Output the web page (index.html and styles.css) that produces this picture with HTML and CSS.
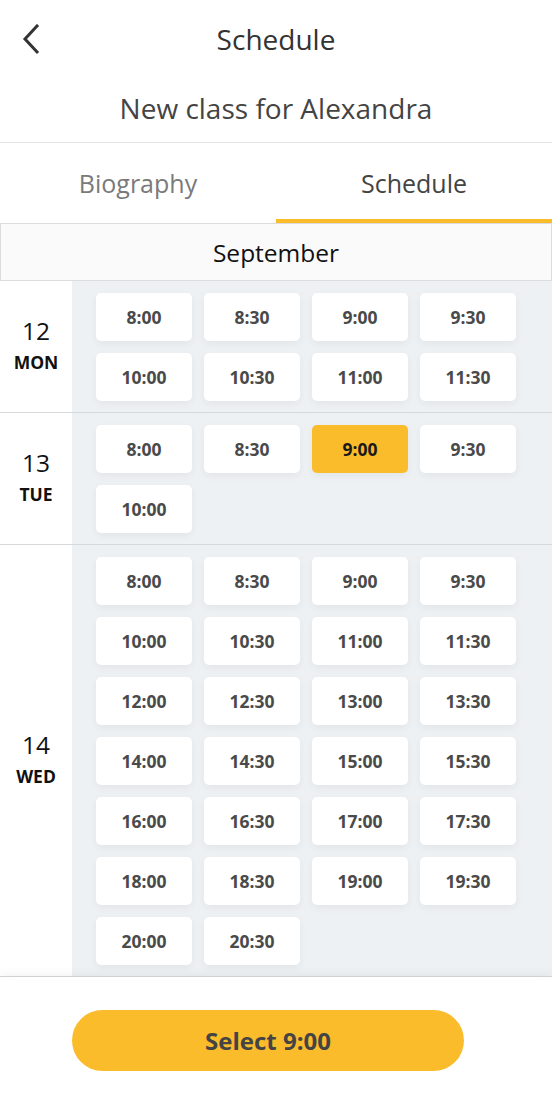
FILE: index.html
```html
<!DOCTYPE html>
<html>
<head>
<meta charset="utf-8">
<link rel="stylesheet" href="styles.css">
</head>
<body>
<div class="app">
  <header class="topbar">
    <svg class="back" width="24" height="32" viewBox="0 0 24 32"><polyline points="15,2 3,15 15,28" fill="none" stroke="#333" stroke-width="3" stroke-linecap="square"/></svg>
    <h1 class="title">Schedule</h1>
  </header>
  <div class="subtitle">New class for Alexandra</div>
  <nav class="tabs">
    <div class="tab">Biography</div>
    <div class="tab active">Schedule</div>
  </nav>
  <div class="month">September</div>
  <div class="days">
    <section class="day">
      <div class="label"><span class="num">12</span><span class="dow">MON</span></div>
      <div class="slots">
        <div class="slot">8:00</div><div class="slot">8:30</div><div class="slot">9:00</div><div class="slot">9:30</div>
        <div class="slot">10:00</div><div class="slot">10:30</div><div class="slot">11:00</div><div class="slot">11:30</div>
      </div>
    </section>
    <section class="day">
      <div class="label"><span class="num">13</span><span class="dow">TUE</span></div>
      <div class="slots">
        <div class="slot">8:00</div><div class="slot">8:30</div><div class="slot selected">9:00</div><div class="slot">9:30</div>
        <div class="slot">10:00</div>
      </div>
    </section>
    <section class="day">
      <div class="label"><span class="num">14</span><span class="dow">WED</span></div>
      <div class="slots">
        <div class="slot">8:00</div><div class="slot">8:30</div><div class="slot">9:00</div><div class="slot">9:30</div>
        <div class="slot">10:00</div><div class="slot">10:30</div><div class="slot">11:00</div><div class="slot">11:30</div>
        <div class="slot">12:00</div><div class="slot">12:30</div><div class="slot">13:00</div><div class="slot">13:30</div>
        <div class="slot">14:00</div><div class="slot">14:30</div><div class="slot">15:00</div><div class="slot">15:30</div>
        <div class="slot">16:00</div><div class="slot">16:30</div><div class="slot">17:00</div><div class="slot">17:30</div>
        <div class="slot">18:00</div><div class="slot">18:30</div><div class="slot">19:00</div><div class="slot">19:30</div>
        <div class="slot">20:00</div><div class="slot">20:30</div>
      </div>
    </section>
  </div>
  <footer class="footer">
    <button class="select">Select 9:00</button>
  </footer>
</div>
</body>
</html>
```

FILE: styles.css
```css
* { box-sizing: border-box; }
html, body { margin: 0; padding: 0; background: #fff; }
body { font-family: "Open Sans", "Noto Sans", sans-serif; color: #333; }
.app { width: 552px; height: 1112px; display: flex; flex-direction: column; overflow: hidden; }
.topbar { height: 78px; display: flex; align-items: center; justify-content: center; position: relative; }
.back { position: absolute; left: 22px; top: 24px; }
.title { margin: 0; font-size: 28px; font-weight: 400; color: #333; line-height: 1; padding-bottom: 1px; }
.subtitle { height: 65px; display: flex; align-items: center; justify-content: center; font-size: 28px; color: #444; border-bottom: 1px solid #e3e3e3; padding-bottom: 4px; }
.tabs { display: flex; height: 80px; }
.tab { flex: 1; display: flex; align-items: center; justify-content: center; font-size: 25px; color: #7a7a7a; border-bottom: 4px solid transparent; padding-top: 3px; }
.tab.active { color: #444; border-bottom-color: #fbbc2c; }
.month { height: 58px; border: 1px solid #dcdcdc; background: #fafafa; display: flex; align-items: center; justify-content: center; font-size: 24.5px; color: #111; }
.days { flex: none; }
.day { display: flex; border-bottom: 1px solid #d6d9dc; }
.label { width: 72px; background: #fff; display: flex; flex-direction: column; align-items: center; justify-content: center; padding-bottom: 2px; }
.num { font-size: 24.5px; color: #111; line-height: 32px; }
.dow { font-size: 17.5px; font-weight: 700; color: #111; line-height: 30px; }
.slots { flex: 1; background: #eef1f4; display: grid; grid-template-columns: repeat(4, 96px); gap: 12px; padding: 12px 24px 11px; align-content: start; }
.slot { height: 48px; background: #fff; border-radius: 5px; display: flex; align-items: center; justify-content: center; font-size: 17.5px; font-weight: 700; color: #4a4a4a; box-shadow: 0 3px 8px rgba(0,0,0,0.05); }
.slot.selected { background: #fbbc2c; color: #1a1a1a; }
.footer { flex: 1; background: #fff; box-shadow: 0 -2px 10px rgba(0,0,0,0.06); position: relative; padding-top: 33px; padding-left: 72px; }
.select { width: 392px; height: 61px; border: none; border-radius: 31px; background: #fbbc2c; font-family: "Open Sans", sans-serif; font-size: 24px; font-weight: 700; color: #444; padding: 0; }
```
